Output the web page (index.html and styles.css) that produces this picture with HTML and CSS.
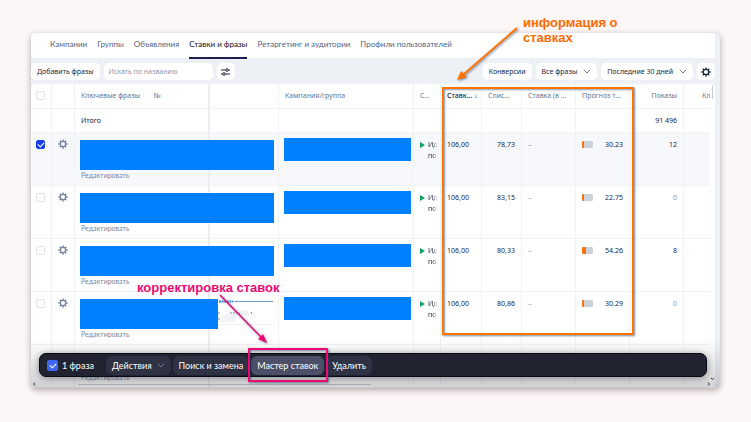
FILE: index.html
```
<!DOCTYPE html>
<html lang="ru">
<head>
    <meta charset="UTF-8">
    <title>Ставки и фразы</title>
    <link rel="stylesheet" href="styles.css">
</head>
<body>
    <svg class="symbols" aria-hidden="true">
        <symbol id="gear" viewBox="0 0 16 16">
            <circle cx="8" cy="8" r="4.2" fill="none" stroke="currentColor" stroke-width="1.8"/>
            <path d="M8 .6v3M8 12.4v3M.6 8h3M12.4 8h3M2.8 2.8l2.1 2.1M11.1 11.1l2.1 2.1M2.8 13.2l2.1-2.1M11.1 4.9l2.1-2.1" stroke="currentColor" stroke-width="2.2"/>
        </symbol>
        <symbol id="chevron" viewBox="0 0 8 5">
            <path d="M.8.8L4 4 7.2.8" fill="none" stroke="currentColor" stroke-width="1"/>
        </symbol>
        <symbol id="play" viewBox="0 0 5 6">
            <path d="M0 0l5 3-5 3z" fill="#0fa35f"/>
        </symbol>
    </svg>

    <div class="window">
        <!-- Вкладки -->
        <nav class="tabs">
            <a class="tab" href="#">Кампании</a>
            <a class="tab" href="#">Группы</a>
            <a class="tab" href="#">Объявления</a>
            <a class="tab active" href="#">Ставки и фразы</a>
            <a class="tab" href="#">Ретаргетинг и аудитории</a>
            <a class="tab" href="#">Профили пользователей</a>
        </nav>

        <!-- Панель инструментов -->
        <div class="toolbar">
            <button class="tool">Добавить фразы</button>
            <input class="search" type="text" placeholder="Искать по названию" aria-label="Искать по названию">
            <button class="tool square" aria-label="Фильтры">
                <svg width="9" height="8" viewBox="0 0 18 16" fill="none" stroke="currentColor" stroke-width="2">
                    <path d="M0 4h9M15 4h3M0 12h3M9 12h9"/>
                    <circle cx="12" cy="4" r="2.6"/>
                    <circle cx="6" cy="12" r="2.6"/>
                </svg>
            </button>
            <span class="spacer"></span>
            <button class="tool">Конверсии</button>
            <button class="tool">Все фразы <svg class="chevron"><use href="#chevron"/></svg></button>
            <button class="tool">Последние 30 дней <svg class="chevron"><use href="#chevron"/></svg></button>
            <button class="tool square" aria-label="Настройки"><svg class="gear"><use href="#gear"/></svg></button>
        </div>

        <!-- Таблица фраз -->
        <div class="table-panel">
            <table class="phrases">
                <colgroup>
                    <col class="c-check"><col class="c-gear"><col class="c-phrase"><col class="c-rest"><col class="c-campaign"><col class="c-status">
                    <col class="c-bid"><col class="c-cost"><col class="c-net"><col class="c-forecast"><col class="c-shows"><col class="c-clicks">
                </colgroup>
                <thead>
                    <tr>
                        <th><input type="checkbox" aria-label="Выбрать все"></th>
                        <th></th>
                        <th class="sticky">Ключевые фразы <span class="num-sign">№</span></th>
                        <th></th>
                        <th>Кампания/группа</th>
                        <th>С...</th>
                        <th class="sorted">Ставк... <span class="sort">↓</span></th>
                        <th>Спис...</th>
                        <th>Ставка (в ...</th>
                        <th>Прогноз т...</th>
                        <th class="num">Показы</th>
                        <th class="cut">Кл</th>
                    </tr>
                </thead>
                <tbody>
                    <tr class="total">
                        <td></td><td></td><td class="sticky">Итого</td><td></td><td></td><td></td>
                        <td></td><td></td><td></td><td></td><td class="num">91 496</td><td></td>
                    </tr>
                    <tr class="phrase selected">
                        <td><input type="checkbox" aria-label="Выбрать фразу" checked></td>
                        <td><svg class="gear"><use href="#gear"/></svg></td>
                        <td class="sticky"><div class="mask"></div><a class="edit" href="#">Редактировать</a></td>
                        <td></td>
                        <td><div class="mask-group"></div></td>
                        <td><div class="status"><svg class="play"><use href="#play"/></svg><span class="state">Ид<br>по</span></div></td>
                        <td>106,00</td>
                        <td class="num">78,73</td>
                        <td class="dash">–</td>
                        <td><div class="forecast"><meter class="m" min="0" max="100" value="20"></meter>30.23</div></td>
                        <td class="num">12</td>
                        <td></td>
                    </tr>
                    <tr class="phrase">
                        <td><input type="checkbox" aria-label="Выбрать фразу"></td>
                        <td><svg class="gear"><use href="#gear"/></svg></td>
                        <td class="sticky"><div class="mask"></div><a class="edit" href="#">Редактировать</a></td>
                        <td></td>
                        <td><div class="mask-group"></div></td>
                        <td><div class="status"><svg class="play"><use href="#play"/></svg><span class="state">Ид<br>по</span></div></td>
                        <td>106,00</td>
                        <td class="num">83,15</td>
                        <td class="dash">–</td>
                        <td><div class="forecast"><meter class="m" min="0" max="100" value="16"></meter>22.75</div></td>
                        <td class="num zero">0</td>
                        <td></td>
                    </tr>
                    <tr class="phrase">
                        <td><input type="checkbox" aria-label="Выбрать фразу"></td>
                        <td><svg class="gear"><use href="#gear"/></svg></td>
                        <td class="sticky"><div class="mask"></div><a class="edit" href="#">Редактировать</a></td>
                        <td></td>
                        <td><div class="mask-group"></div></td>
                        <td><div class="status"><svg class="play"><use href="#play"/></svg><span class="state">Ид<br>по</span></div></td>
                        <td>106,00</td>
                        <td class="num">80,33</td>
                        <td class="dash">–</td>
                        <td><div class="forecast"><meter class="m" min="0" max="100" value="38"></meter>54.26</div></td>
                        <td class="num">8</td>
                        <td></td>
                    </tr>
                    <tr class="phrase">
                        <td><input type="checkbox" aria-label="Выбрать фразу"></td>
                        <td><svg class="gear"><use href="#gear"/></svg></td>
                        <td class="sticky"><div class="mask short"></div><a class="edit" href="#">Редактировать</a></td>
                        <td>
                            <svg class="scrap" viewBox="0 0 58 28">
                                <path d="M3 2.500h14" stroke="#3f83dc" stroke-width="2" stroke-dasharray="2 .6"/>
                                <path d="M18 2.500h39" stroke="#6fa3d4" stroke-width="1"/>
                                <path d="M2 14h3M14 14h13M2 20h3M35 13l1 3" stroke="#7d8799" stroke-width="1" stroke-dasharray="2 1"/>
                                <path d="M5 16h14v7H5zM24 11h9v6h-9z" fill="#f1f2f4"/>
                                <path d="M2 25.500h55" stroke="#f0f2f5"/>
                            </svg>
                        </td>
                        <td><div class="mask-group"></div></td>
                        <td><div class="status"><svg class="play"><use href="#play"/></svg><span class="state">Ид<br>по</span></div></td>
                        <td>106,00</td>
                        <td class="num">80,86</td>
                        <td class="dash">–</td>
                        <td><div class="forecast"><meter class="m" min="0" max="100" value="20"></meter>30.29</div></td>
                        <td class="num zero">0</td>
                        <td></td>
                    </tr>
                    <tr class="phrase last">
                        <td></td><td></td><td class="sticky"><a class="edit" href="#">Редактировать</a></td><td></td><td></td><td></td>
                        <td></td><td></td><td></td><td></td><td></td><td></td>
                    </tr>
                </tbody>
            </table>
            <div class="scroll-y"></div>
        </div>

        <div class="fade"></div>
        <!-- Полосы прокрутки -->
        <svg class="scroll-x" viewBox="0 0 689 12" aria-hidden="true">
            <path d="M47 8.500h293" stroke="#a9adb3"/>
            <path d="M4 6.500L2.500 8 4 9.500M677 6.500l1.500 1.500-1.500 1.500M680 2l1.500 1.500L683 2" fill="none" stroke="#2a2e38"/>
        </svg>

        <!-- Панель действий -->
        <div class="actions">
            <label class="picked"><input type="checkbox" checked> 1 фраза</label>
            <button class="action">Действия <svg class="chevron"><use href="#chevron"/></svg></button>
            <button class="action">Поиск и замена</button>
            <button class="action master">Мастер ставок</button>
            <button class="action">Удалить</button>
        </div>
    </div>

    <!-- Пояснения -->
    <div class="note-box bids"></div>
    <div class="note-box fix"></div>
    <p class="note note-bids">информация о<br>ставках</p>
    <p class="note note-fix">корректировка ставок</p>
    <svg class="arrows" width="751" height="422" viewBox="0 0 751 422" aria-hidden="true">
        <path d="M517 28L464 74" stroke="#ff7400" stroke-width="2"/>
        <path d="M457 80l4-9 6 6z" fill="#ff7400"/>
        <path d="M220 295l41 42" stroke="#ed0973" stroke-width="1.500"/>
        <path d="M267 343l-9-4 5-5z" fill="#ed0973"/>
    </svg>
</body>
</html>
```
FILE: styles.css
```
* {
    box-sizing: border-box;
}
body {
    margin: 0;
    padding: 33px 31px;
    position: relative;
    background-color: #fdf6f6;
    font-family: Lato, "Noto Sans", sans-serif;
    font-size: 8px;
    line-height: 11px;
    color: #1c2540;
}
a {
    color: inherit;
    text-decoration: none;
}
button, input {
    font: inherit;
    color: inherit;
    margin: 0;
}
.symbols {
    position: absolute;
    width: 0;
    height: 0;
}
.window {
    position: relative;
    overflow: hidden;
    border-radius: 5px;
    background-color: #edf0f5;
    box-shadow: 0 2px 6px rgba(60,40,50,0.4);
}

/* вкладки */
.tabs {
    display: flex;
    gap: 10px;
    height: 26px;
    margin-right: 5px;
    padding-left: 19px;
    background: linear-gradient(white, white) 0 0 / 100% 25px no-repeat;
    border-radius: 0 0 5px 5px;
    color: #56637f;
}
.tab {
    padding-top: 6px;
    border-bottom: 2px solid transparent;
    white-space: nowrap;
}
.tab.active {
    color: #1c2540;
    font-weight: 500;
    border-bottom-color: #1c2050;
}

/* инструменты */
.toolbar {
    display: flex;
    gap: 4px;
    height: 25px;
    padding: 4px 5px 4px 0;
    font-family: "Noto Sans", sans-serif;
    font-size: 7px;
}
.tool {
    display: flex;
    align-items: center;
    gap: 6px;
    padding: 0 6px;
    border: none;
    border-radius: 5px;
    background-color: white;
    white-space: nowrap;
}
.tool.square {
    width: 18px;
    justify-content: center;
    padding: 0;
}
.search {
    width: 109px;
    padding: 0 5px;
    border: none;
    border-radius: 5px;
    background-color: white;
}
.search::placeholder {
    color: #8f98ab;
}
.spacer {
    flex: 1;
}
.chevron {
    width: 8px;
    height: 5px;
    color: #6d7690;
}
.gear {
    display: block;
    width: 10px;
    height: 10px;
}

/* таблица */
.table-panel {
    position: relative;
    margin-right: 5px;
    padding-right: 5px;
    background-color: white;
    border-radius: 5px 5px 0 0;
}
.phrases {
    width: 100%;
    table-layout: fixed;
    border-collapse: separate;
    border-spacing: 0;
    font-family: "Noto Sans", sans-serif;
    font-size: 7px;
}
.c-check { width: 21px; }
.c-gear { width: 23px; }
.c-phrase { width: 135px; }
.c-rest { width: 69px; }
.c-status { width: 27px; }
.c-bid { width: 41px; }
.c-cost { width: 40px; }
.c-net { width: 54px; }
.c-forecast { width: 54px; }
.c-shows { width: 54px; }
.c-clicks { width: 26px; }
th, td {
    padding: 6px 6px 0;
    border-right: 1px solid #f0f2f6;
    border-bottom: 1px solid #f0f2f6;
    vertical-align: top;
    text-align: left;
    font-weight: 400;
    white-space: nowrap;
}
th {
    height: 25px;
    color: #6a7690;
}
th:first-child, td:first-child {
    padding-left: 5px;
}
th:last-child, td:last-child {
    border-right: none;
}
th.sticky, td.sticky {
    border-right: 2px solid #edeef1;
}
.total td {
    height: 24px;
}
.phrase td {
    height: 53px;
}
.selected td {
    background-color: #f6f8fc;
}
.phrase.last td {
    height: 43px;
}
.phrase.last .edit {
    padding-top: 21px;
}
th.sorted {
    color: #1c2540;
    font-weight: 500;
}
.num-sign {
    margin-left: 12px;
}
th.cut {
    padding: 6px 0 0 18px;
}
th.num, td.num {
    text-align: right;
}
.zero, .dash {
    color: #8e97aa;
}
td .gear {
    color: #76809a;
}
input[type=checkbox] {
    appearance: none;
    display: block;
    width: 9px;
    height: 9px;
    margin-top: 1px;
    border: 1px solid #dfe3ec;
    border-radius: 2px;
    background-color: white;
}
input[type=checkbox]:checked {
    position: relative;
    border-color: #1a3df0;
    background-color: #1a3df0;
}
input[type=checkbox]:checked::after {
    content: "";
    position: absolute;
    left: 1px;
    top: 1px;
    width: 5px;
    height: 3px;
    border-left: 1px solid white;
    border-bottom: 1px solid white;
    transform: rotate(-45deg);
}
/* закрашенные данные шире своей колонки */
.mask {
    position: relative;
    z-index: 1;
    width: 194px;
    height: 30px;
    margin: 1px 0 0 -1px;
    background-color: #0080ff;
}
.mask.short {
    width: 138px;
}
.mask-group {
    height: 23px;
    margin: -1px -4px 0 -1px;
    background-color: #0080ff;
}
.edit {
    display: block;
    color: #7b879c;
    font-family: Lato, "Noto Sans", sans-serif;
}
.status {
    display: flex;
    gap: 3px;
}
/* текст статуса гаснет у края колонки */
.state {
    mask-image: linear-gradient(90deg, black 45%, transparent 95%);
}
.play {
    flex: none;
    width: 5px;
    height: 6px;
    margin-top: 3px;
}
.forecast {
    display: flex;
    justify-content: space-between;
    align-items: center;
}
.m {
    appearance: none;
    width: 11px;
    height: 7px;
    border-radius: 1px;
    overflow: hidden;
}
.m::-webkit-meter-bar {
    height: 7px;
    border: none;
    border-radius: 1px;
    background: #ccd2dc;
}
.m::-webkit-meter-optimum-value {
    background: #ff7400;
}
.scrap {
    display: block;
    width: 58px;
    height: 28px;
    margin-top: 1px;
}
.scroll-y {
    position: absolute;
    right: 2px;
    top: 2px;
    width: 1px;
    height: 13px;
    background-color: #c6cad2;
}

/* панель действий */
.fade {
    position: absolute;
    left: 0;
    right: 0;
    bottom: 0;
    height: 50px;
    background: linear-gradient(rgba(100,105,110,0), rgba(100,105,110,0.3));
}
.scroll-x {
    position: absolute;
    left: 0;
    bottom: 0;
    width: 100%;
    height: 12px;
}
.actions {
    position: absolute;
    left: 8px;
    right: 13px;
    bottom: 11px;
    height: 24px;
    display: flex;
    align-items: center;
    gap: 2px;
    padding: 2px 7px;
    border: 1px solid #090c18;
    border-radius: 7px;
    background-color: #212430;
    box-shadow: 0 1px 7px rgba(0,0,0,0.4);
    color: white;
    font-size: 9px;
}
.picked {
    display: flex;
    align-items: center;
    gap: 4px;
    margin-right: 10px;
}
.actions input[type=checkbox]:checked {
    width: 11px;
    height: 11px;
    margin-top: 0;
    border-color: #3d66f5;
    background-color: #3d66f5;
}
.actions input[type=checkbox]:checked::after {
    left: 2px;
    top: 2px;
}
.action {
    display: flex;
    align-items: center;
    gap: 5px;
    height: 19px;
    padding: 0 6px;
    border: none;
    border-radius: 6px;
    background-color: #2e3242;
    white-space: nowrap;
}
.action.master {
    background-color: #4b5068;
}

/* пояснения поверх окна */
.note {
    position: absolute;
    margin: 0;
    font: bold 13px/15px "Liberation Sans", Arial, sans-serif;
    white-space: nowrap;
}
.note-bids {
    left: 523px;
    top: 15px;
    color: #ff6a00;
}
.note-fix {
    left: 137px;
    top: 280px;
    color: #ed0973;
}
.note-box {
    position: absolute;
    border: 2px solid #ff7400;
    box-shadow: 1px 1px 2px rgba(30,60,100,0.6), inset 1px 1px 2px rgba(30,60,100,0.5);
}
.bids {
    left: 442px;
    top: 87px;
    width: 192px;
    height: 248px;
}
.fix {
    left: 248px;
    top: 348px;
    width: 80px;
    height: 34px;
    border-color: #ed0973;
}
.arrows {
    position: absolute;
    left: 0;
    top: 0;
    filter: drop-shadow(1px 1px 1px rgba(30,60,100,0.6));
}
```
